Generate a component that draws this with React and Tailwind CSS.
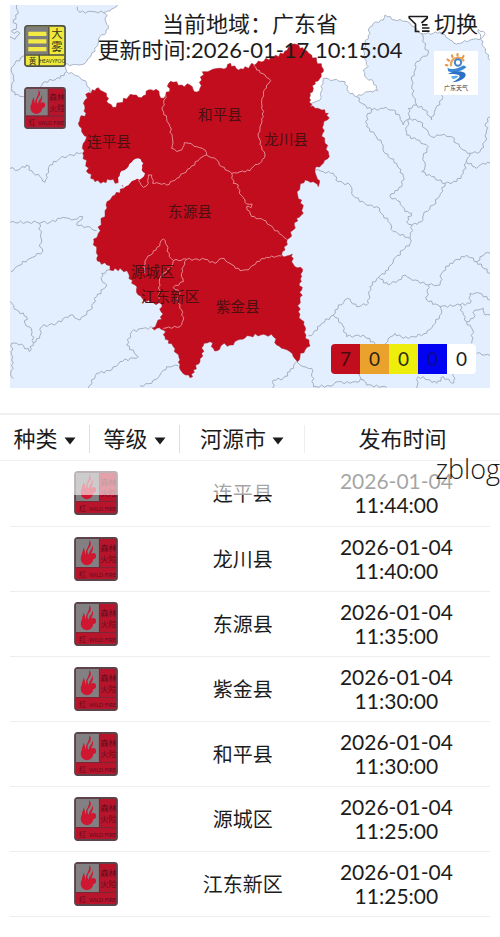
import { useState } from "react";

// Map space: three units to one css pixel at the 480px phone width
const viewBox = "30 15 1440 1149";

const whiteArea =
	"353,15 330,33 310,38 322,48 315,60 325,78 318,98 300,110 290,140 270,172 255,190 235,195 192,194 200,215 235,228 260,250 270,272 300,340 700,400 960,300 970,235 1000,240 1035,245 1045,275 1070,290 1105,275 1133,272 1120,245 1100,235 1090,210 1105,200 1090,170 1095,130 1110,100 1105,90 1120,70 1150,60 1155,45 1185,60 1200,58 1230,70 1262,100 1300,100 1320,95 1350,120 1370,132 1410,120 1445,115 1455,100 1435,88 1450,140 1470,180 1490,180 1490,0 353,0";

const cityOutline =
	"255,300 265,278 285,272 295,263 310,275 320,290 325,310 338,322 360,308 385,290 400,285 415,292 430,287 445,270 468,268 478,285 492,295 497,285 508,275 506,250 520,247 545,255 570,255 583,275 598,272 605,240 607,215 630,212 655,205 680,203 692,190 708,205 730,208 750,197 770,190 820,170 850,162 862,150 866,140 885,132 900,145 920,152 935,165 950,182 965,200 970,215 960,235 945,245 940,265 930,280 932,300 930,320 945,325 965,330 985,340 982,360 970,375 968,400 975,430 985,455 988,470 970,490 945,508 950,530 958,550 955,560 940,545 915,540 900,560 893,585 905,600 910,640 890,655 880,690 868,715 860,725 855,750 845,765 860,768 877,762 880,775 875,785 885,800 908,808 905,830 898,850 905,870 900,900 895,935 905,960 915,980 918,1005 930,1038 915,1050 900,1070 893,1085 880,1070 870,1055 845,1045 830,1035 820,1010 790,1003 750,1008 720,1018 690,1035 665,1035 652,1052 640,1045 630,1025 612,1030 605,1060 600,1085 580,1110 578,1130 570,1133 545,1115 538,1100 540,1080 530,1060 520,1040 505,1030 495,1010 490,990 470,985 457,985 470,970 485,958 483,935 485,912 460,908 430,900 415,885 405,855 395,850 385,820 360,805 340,812 320,795 300,785 290,775 290,750 282,725 295,700 303,665 315,640 318,615 330,600 345,585 375,560 355,548 330,540 310,545 285,545 265,520 258,490 248,460 250,430 260,410 245,395 235,370 240,355 258,340 250,310 255,300";

const lake = "355,540 360,520 385,500 400,480 415,475 430,490 425,510 435,520 425,535 405,540 390,550 372,563 355,550 355,540";

const countyLines = [
	"497,285 487,330 500,355 510,380 518,420 515,445 530,455 545,450 553,428 570,430 590,440 615,450 620,465",
	"620,465 600,475 570,505 530,535 500,555 470,548 458,550 455,525 445,525 445,550 430,562 415,540",
	"620,465 650,480 665,500 695,520 720,515 750,512 760,500 785,485 795,465 785,440 775,410 780,380 790,350 785,310 790,280 800,255 812,242 795,225 770,210 760,195",
	"695,520 700,550 715,555 718,580 735,600 740,612 756,612 752,624 740,620 755,650 790,660 820,685 845,705 860,718",
	"845,768 800,772 770,785 745,810 720,812 690,790 665,775 645,790 615,778 560,778 520,782 508,770 500,735 490,717 480,730 468,750 440,775 432,800 435,820",
	"520,782 515,800 490,820 478,840 478,880 475,905",
	"560,778 550,800 545,820 550,845 520,862 540,875 530,900 545,930 550,960 540,980 490,985"
];

const neighbourLines = [
	"50,15 55,40 40,60 50,80 35,95 60,100 45,118 30,110",
	"75,165 45,190 33,210 40,235 35,265 45,285 75,290",
	"120,262 135,245 180,235 200,215",
	"232,20 240,37 280,35 310,38",
	"30,505 55,510 80,495 100,520 120,530 135,547 150,495 180,475 215,465 245,458",
	"1070,290 1085,310 1115,330 1100,350 1100,380 1125,405 1145,430 1155,460 1190,490 1210,530 1205,560 1185,572 1170,590 1200,605 1215,635 1235,640 1220,665 1237,675 1230,715",
	"1115,330 1150,325 1180,330 1200,350 1210,375 1220,360 1230,355",
	"1265,100 1275,140 1285,160 1250,185 1245,210 1235,240 1240,290 1250,315 1225,325 1230,355 1260,365 1275,385 1295,410 1325,405 1355,410 1370,430 1390,450 1410,460 1440,455 1455,425 1460,390 1457,370 1470,350",
	"1250,315 1275,330 1295,360 1305,330 1325,300 1325,285",
	"1230,355 1220,380 1220,405 1250,420 1285,440 1270,470 1275,500 1265,515 1295,530 1335,550 1370,545 1390,520 1400,480 1410,460",
	"1400,485 1430,505 1450,490 1470,490",
	"1335,550 1322,580 1300,615 1270,645 1265,665 1237,675",
	"945,510 970,515 1000,520 1015,545 1050,555 1060,588 1100,615 1130,620 1150,645 1170,670 1180,695 1230,715 1230,730 1210,750 1180,780 1165,810 1135,832 1110,860 1105,910 1070,920 1043,895 1005,930 1000,945 965,970 940,1000 925,1007",
	"1135,832 1165,855 1195,840 1215,825 1230,835 1285,855 1320,855 1325,820 1350,790 1400,765 1430,785 1470,820",
	"1430,785 1455,760 1470,760",
	"1285,855 1280,900 1320,920 1380,915 1410,910 1410,880 1440,880 1470,900",
	"1380,915 1390,945 1400,965 1420,955 1425,930 1450,925 1455,945 1470,945",
	"1400,965 1418,990 1415,1030",
	"1320,920 1325,940 1300,975 1280,1000 1240,1010 1210,1015 1185,1000 1165,1015 1155,1032",
	"1000,945 1025,970 1040,1010 1090,1005 1125,1032",
	"1430,1060 1470,1067",
	"890,1085 910,1100 935,1105 940,1160",
	"890,1085 870,1115 850,1135 820,1140 818,1164",
	"940,1160 990,1158 1015,1145 1050,1150 1090,1140 1070,1120",
	"1090,1140 1100,1155 1160,1162",
	"1250,1164 1255,1130 1290,1140 1310,1150 1330,1130 1350,1145 1362,1148 1362,1120",
	"30,667 110,667 150,667 190,652 215,660 248,650 230,675 260,680 290,692",
	"118,670 125,720 118,735 128,755 90,775 50,800 33,815",
	"330,810 305,820 305,840 320,855 290,890 270,930 240,960 210,945 170,970 125,980 118,1015 100,1028 95,990 75,970 80,950 50,930 30,905",
	"100,1028 88,1055 65,1032 35,1030 35,1080 40,1105 32,1120 40,1135",
	"460,983 430,985 395,995 380,1035 415,1070 360,1085 335,1110 290,1120 265,1164",
	"535,1097 500,1100 480,1125 455,1150 420,1157"
];

const labels = [
	{ name: "连平县", x: 327, y: 441 },
	{ name: "和平县", x: 660, y: 361 },
	{ name: "龙川县", x: 858, y: 434 },
	{ name: "东源县", x: 570, y: 651 },
	{ name: "源城区", x: 458, y: 831 },
	{ name: "江东新区", x: 510, y: 906 },
	{ name: "紫金县", x: 713, y: 937 }
];

const levels = [
	{ id: "red", count: 7, className: "bg-[#c10d1e] text-[#4a0a0c] rounded-l" },
	{ id: "orange", count: 0, className: "bg-[#eba22c] text-[#2c2415]" },
	{ id: "yellow", count: 0, className: "bg-[#eeee0c] text-[#2c2c15]" },
	{ id: "blue", count: 0, className: "bg-[#0202f2] text-[#0a0a90]" },
	{ id: "white", count: 0, className: "bg-white text-[#1c1c1c] rounded-r" }
];

const warnings = [
	{ area: "连平县", date: "2026-01-04", time: "11:44:00" },
	{ area: "龙川县", date: "2026-01-04", time: "11:40:00" },
	{ area: "东源县", date: "2026-01-04", time: "11:35:00" },
	{ area: "紫金县", date: "2026-01-04", time: "11:30:00" },
	{ area: "和平县", date: "2026-01-04", time: "11:30:00" },
	{ area: "源城区", date: "2026-01-04", time: "11:25:00" },
	{ area: "江东新区", date: "2026-01-04", time: "11:25:00" }
];

/**
 * Breaks every long segment into short ones with a small fixed wobble,
 * so that the borders look surveyed and not ruled.
 */
const rough = (points, amount = 4) => {
	const list = points.split(" ").map((pair) => pair.split(",").map(Number));
	const result = [list[0]];

	for (let i = 1; i < list.length; i += 1) {
		const [x0, y0] = list[i - 1];
		const [x1, y1] = list[i];
		const length = Math.hypot(x1 - x0, y1 - y0) || 1;
		const steps = length > 200 ? 1 : Math.max(1, Math.round(length / 8));

		for (let s = 1; s < steps; s += 1) {
			const t = s / steps;
			const shift = Math.sin((x0 * 3.1) + (y0 * 1.7) + (s * 2.4)) * amount;

			result.push([
				Math.round(x0 + ((x1 - x0) * t) - (((y1 - y0) / length) * shift)),
				Math.round(y0 + ((y1 - y0) * t) + (((x1 - x0) / length) * shift))
			]);
		}
		result.push([x1, y1]);
	}

	return result.map((pair) => pair.join(",")).join(" ");
};

const WarningMap = () => (
	<svg viewBox={viewBox} className="block w-full bg-[#e3effe]">
		<polygon points={rough(whiteArea, 3)} fill="#ffffff" stroke="#a9b4c6" strokeWidth="3" />
		<g fill="none" stroke="#a5aebd" strokeWidth="3" strokeLinejoin="round">
			{neighbourLines.map((points) => <polyline key={points} points={rough(points)} />)}
		</g>
		<polygon points={rough(cityOutline, 5)} fill="#c10d1e" stroke="#a8202c" strokeWidth="1.5" />
		<polygon points={rough(lake, 3)} fill="#e9f2fd" />
		<g fill="none" stroke="#e58b92" strokeWidth="3" strokeLinejoin="round">
			{countyLines.map((points) => <polyline key={points} points={rough(points, 3)} />)}
		</g>
		<g fill="#4d0f10" fontSize="44" textAnchor="middle">
			{labels.map(({ name, x, y }) => <text key={name} x={x} y={y}>{name}</text>)}
		</g>
	</svg>
);

const FogBadge = () => (
	<svg viewBox="0 0 44 44" className="w-[42px]">
		<rect x="1" y="1" width="42" height="42" rx="2.5" fill="#efe83a" stroke="#4f5048" strokeWidth="1.8" />
		<path d="M2 2h23.500v29H2z" fill="#7e7e7c" />
		<path d="M26 2v29M2 31.500h40M16 31.500V43" stroke="#4f5048" strokeWidth="1.500" />
		<path d="M4.500 7h19v4.500h-19zM4.500 15h19v4.500h-19zM4.500 23h19v4.500h-19z" fill="#f3ea45" />
		<g fill="#38361a" textAnchor="middle">
			<text x="34.500" y="14" fontSize="12">大</text>
			<text x="34.500" y="27.500" fontSize="12">雾</text>
			<text x="9" y="40.500" fontSize="8">黄</text>
			<text x="29.500" y="39.500" fontSize="5">HEAVYFOG</text>
		</g>
	</svg>
);

const FireBadge = ({ className }) => (
	<svg viewBox="0 0 44 44" className={className}>
		<rect x="1" y="1" width="42" height="42" rx="2.5" fill="#b8152c" stroke="#5b4349" strokeWidth="1.8" />
		<path d="M2 2h23v28H2z" fill="#828082" />
		<path d="M25.500 2v28.500M2 30.500h40" stroke="#7a2735" strokeWidth="1.200" />
		<g fill="#cf1731">
			<path d="M15 3c3.400 3.600 1.400 6-.4 8.600-1.600 2.400-1.200 4.200-.2 6.400h-2.600c-1.200-5.400 4.600-8.400 3.200-15z" />
			<path d="M18.500 8.500c1.600 3.600-.6 5.400-1.600 9.500h-2c-.4-4.400 3.400-5 3.600-9.500z" />
			<path d="M9.500 10.500c1.600 2.400 1.400 4.600 1.800 7.500h-3c-1-2.600 1.400-4.400 1.200-7.500z" />
			<circle cx="19.200" cy="19" r="2.900" />
			<path d="M8.200 17c3.600.6 7.200 0 11 .6 1.200 3.800-.4 10.400-6.200 10.600-5.800-.4-8-6.600-4.800-11.200z" />
		</g>
		<g fill="#5f0c1a" textAnchor="middle">
			<text x="34.500" y="14" fontSize="8">森林</text>
			<text x="34.500" y="25" fontSize="8">火险</text>
			<text x="8.500" y="39.500" fontSize="7">红</text>
			<text x="28.500" y="39.500" fontSize="5.500">WILD FIRE</text>
		</g>
	</svg>
);

const WeatherLogo = () => (
	<svg viewBox="0 0 44 44" className="w-11 bg-white">
		<g fill="none" strokeLinecap="round">
			<path d="M17 14.500a7 7 0 0 1 12.500-5" stroke="#eba35a" strokeWidth="2.2" />
			<path
				d="M11.800 14l1.500.3M13.500 8.500l1.500 1.200M18 4.500l.6 1.500M23.500 3v1.500M29.500 5l-.8 1.300"
				stroke="#e89848"
				strokeWidth="2.2"
			/>
			<circle cx="24" cy="11.500" r="3.200" stroke="#4585cc" strokeWidth="2" />
		</g>
		<path d="M13.500 17c5 2 11 .5 15.500-2.500 2 .2 3 1 3.200 2-5.500 4.500-13.500 6-18 3.800z" fill="#3a86d4" />
		<path d="M14 23c5-3.500 16-4 17.500 0 1.200 4-6 8-13.500 8.200 4.500-2 8-4.400 7.600-6.200-.8-2-6.600-2-11.600-2z" fill="#2c6fc6" />
		<path d="M17 25.500c3-.8 5.500-.8 7.500-.2-1.500 1.800-3.500 2.500-6 2.700z" fill="#61aee6" />
		<text x="22" y="38.500" fontSize="6" fill="#333333" textAnchor="middle">广东天气</text>
	</svg>
);

const FilterIcon = () => (
	<svg viewBox="0 0 22 18" className="w-[22px]" fill="none" stroke="#1c1c1c" strokeWidth="1.7">
		<path d="M11.500 16.500H7.500V9L1.200 3V1.500h18V3L13.500 8" strokeLinejoin="round" />
		<path d="M14 9.800h5.500M14 13h7.500M14 16.200h7.500" />
	</svg>
);

const FilterSelect = ({ label, options }) => {
	const [value, setValue] = useState(options[0]);

	return (
		<div className="relative flex">
			<select
				aria-label={label}
				value={value}
				onChange={(event) => {
					setValue(event.target.value);
				}}
				className="field-sizing-content appearance-none bg-transparent pr-[18px] text-[22px] leading-7"
			>
				{options.map((option) => <option key={option}>{option}</option>)}
			</select>
			<svg viewBox="0 0 12 8" className="absolute right-0 top-3 w-3 pointer-events-none">
				<path d="M.500 .500h11L6 7.500z" fill="#1c1c1c" />
			</svg>
		</div>
	);
};

const App = () => (
	<main className="min-h-screen bg-white pt-[5px] font-[Lato,'Noto_Sans_CJK_SC',sans-serif] text-[#1c1c1c]">
		<section className="relative mx-2.5">
			<WarningMap />
			<header className="absolute inset-x-0 top-1.5 text-center text-[22px] leading-[26px]">
				<h1>当前地域：广东省</h1>
				<p>更新时间:2026-01-17 10:15:04</p>
			</header>
			<div className="absolute left-3.5 top-5 flex flex-col gap-5">
				<FogBadge />
				<FireBadge className="w-[42px]" />
			</div>
			<div className="absolute right-3 top-1.5 flex flex-col items-end gap-3.5">
				<button type="button" className="flex items-center gap-1 text-[22px] leading-[26px]">
					<FilterIcon />
					切换
				</button>
				<WeatherLogo />
			</div>
			<ul className="absolute bottom-3.5 right-3.5 flex text-[19px] leading-[30px] text-center">
				{levels.map(({ id, count, className }) => (
					<li key={id} className={`w-[29px] ${className}`}>{count}</li>
				))}
			</ul>
		</section>

		<section className="relative mt-[25px]">
			<div className="grid grid-cols-[18%_18%_25%_39%] items-center border-t-2 border-b border-[#f0f0f0] pt-2.5 pb-[7px]">
				<div className="flex justify-center border-r border-[#dedede]">
					<FilterSelect label="种类" options={["种类"]} />
				</div>
				<div className="flex justify-center border-r border-[#dedede]">
					<FilterSelect label="等级" options={["等级"]} />
				</div>
				<div className="flex justify-center border-r border-[#eeeeee]">
					<FilterSelect label="河源市" options={["河源市"]} />
				</div>
				<span className="text-center text-[22px] leading-7">发布时间</span>
			</div>
			<div className="relative mx-2.5">
				<table className="w-full table-fixed text-center">
					<colgroup>
						<col className="w-[36%]" />
						<col className="w-[25%]" />
						<col className="w-[39%]" />
					</colgroup>
					<tbody>
						{warnings.map(({ area, date, time }) => (
							<tr key={area} className="h-[65px] border-b border-[#eeeeee]">
								<td>
									<FireBadge className="mx-auto w-11" />
								</td>
								<td className="text-xl">{area}</td>
								<td className="text-[21px] leading-6">
									<time className="block">{date}</time>
									<time className="block">{time}</time>
								</td>
							</tr>
						))}
					</tbody>
				</table>
				<div className="absolute inset-x-0 top-0 h-[34px] bg-white/60 pointer-events-none" />
			</div>
			<span className="absolute right-0 top-[38px] font-['Open_Sans'] text-[27px] font-light leading-9">zblog</span>
		</section>
	</main>
);

export default App;
